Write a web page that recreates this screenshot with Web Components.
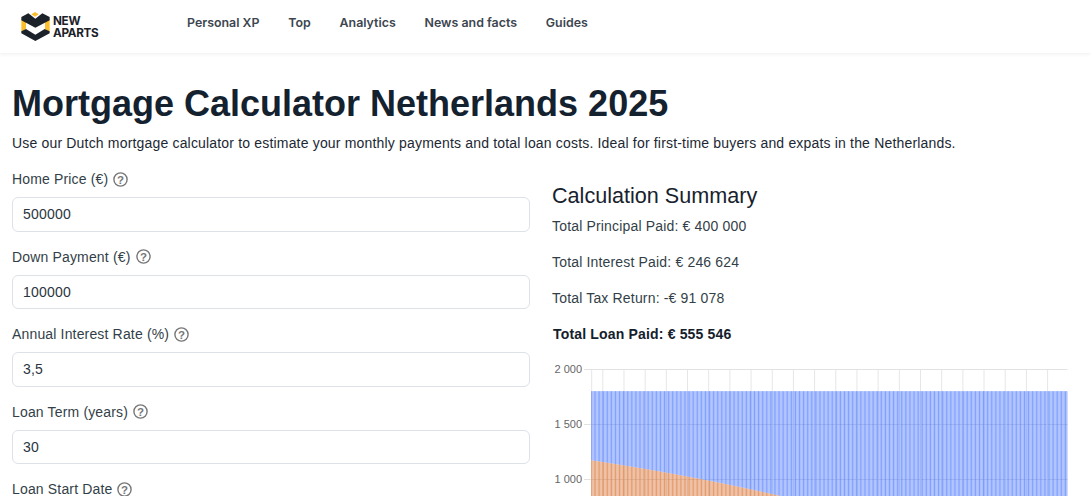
<!DOCTYPE html>
<html><head><meta charset="utf-8"><style>
html,body{margin:0;padding:0;background:#fff;overflow:hidden;height:496px}
body{font-family:"Liberation Sans",Arial,sans-serif;color:#14202c}
</style></head><body>
<site-nav></site-nav>
<calc-page></calc-page>
<script>
class SiteNav extends HTMLElement{constructor(){super();this.attachShadow({mode:'open'}).innerHTML=`<style>
:host{display:flex;align-items:center;box-sizing:border-box;height:53px;padding-bottom:8px;box-shadow:0 1px 4px rgba(0,0,0,.07);background:#fff;position:relative;font-family:Inter,sans-serif}
.logo{display:flex;align-items:center;gap:2px;margin-left:20px;width:167px;padding-top:8px}
.t{font:700 11.700px/12px Inter,sans-serif;color:#1b2229;letter-spacing:-.3px}
a{font-size:12.400px;font-weight:600;color:#3d4650;margin-right:28.800px}
</style><div class="logo"><svg width="31" height="30" viewBox="60 27 93 90"><path d="M105 27L116 34L105 41L94 34Z" fill="#fbbf2d"/><path d="M64 48L78 55V78L64 86Z" fill="#fbbf2d"/><path d="M149 48L135 55V78L149 86Z" fill="#fbbf2d"/><path d="M64 42L85 31L106 47L127 31L149 42V52L106 74L64 52Z" fill="#1b2229"/><path d="M64 85L78 78L106 95L134 78L149 85V91L106 114L64 91Z" fill="#1b2229"/></svg><div class="t">NEW<br>APARTS</div></div>
<a>Personal XP</a><a>Top</a><a>Analytics</a><a>News and facts</a><a>Guides</a>`}}
customElements.define('site-nav',SiteNav);

class HelpIcon extends HTMLElement{constructor(){super();this.attachShadow({mode:'open'}).innerHTML=`<style>:host{display:inline-block;width:15px;height:15px;margin-left:5px;vertical-align:-2.500px}
svg{display:block}text{font:700 11.500px "Liberation Sans",sans-serif;fill:#777}</style><svg width="15" height="15" viewBox="0 0 15 15"><circle cx="7.500" cy="7.500" r="6.600" fill="none" stroke="#777" stroke-width="1.400"/><text x="7.500" y="11.600" text-anchor="middle">?</text></svg>`}}
customElements.define('help-icon',HelpIcon);

class FormField extends HTMLElement{constructor(){super();this.attachShadow({mode:'open'}).innerHTML=`<style>
:host{display:block;margin-bottom:15px}
label{display:block;font-size:14px;line-height:20px;letter-spacing:.16px;color:#333f48;margin-bottom:8px}
.i{box-sizing:border-box;height:34.500px;border:1px solid #dfe1e8;border-radius:6px;padding:0 10px;display:flex;align-items:center;font-size:14px;letter-spacing:.2px;color:#2b3540}
</style><label>${this.getAttribute('label')}<help-icon></help-icon></label><div class="i">${this.getAttribute('value')}</div>`}}
customElements.define('form-field',FormField);

class MortgageChart extends HTMLElement{constructor(){super();
const W=539,H=150;
const X=v=>v-552;
let g='';
const h=[[2000,369.500],[1500,424.500],[1000,479.500]];
h.forEach(([l,y])=>{g+=`<line x1="${X(584)}" x2="${X(1067.500)}" y1="${y-364}" y2="${y-364}" stroke="#e2e2e2"/>`;
g+=`<text x="${X(582)}" y="${y-364+3.500}" text-anchor="end">${l.toString().replace(/\B(?=(\d{3})+$)/g,' ')}</text>`;});
for(let i=0;i<23;i++){const x=i==0?591.700:602.800+(i-1)*21.180;g+=`<line x1="${X(x)}" x2="${X(x)}" y1="${369.500-364}" y2="${H}" stroke="#e6e6e6"/>`;}
const r=.035/12,P=400000,M=P*r/(1-Math.pow(1+r,-360)),step=476.500/360;
let b='',o='';
const yv=v=>478.700-(v-1000)*.1100-364;
let bal=P;
for(let n=0;n<360;n++){const it=bal*r,x=X(591.200)+n*step,w=step*.74;
bal-=M-it;
o+=`<rect x="${x.toFixed(2)}" y="${yv(it).toFixed(2)}" width="${w.toFixed(2)}" height="${(H-yv(it)).toFixed(2)}"/>`;
b+=`<rect x="${x.toFixed(2)}" y="${yv(M).toFixed(2)}" width="${w.toFixed(2)}" height="${(yv(it)-yv(M)).toFixed(2)}"/>`;}
this.attachShadow({mode:'open'}).innerHTML=`<style>:host{display:block;height:${H}px}svg{display:block;overflow:hidden}text{font:11px "Liberation Sans",sans-serif;fill:#666}</style>
<svg width="${W}" height="${H}" viewBox="0 0 ${W} ${H}">${g}<g fill="rgb(60,110,255)" fill-opacity=".66">${b}</g><g fill="rgb(218,118,55)" fill-opacity=".74">${o}</g></svg>`}}
customElements.define('mortgage-chart',MortgageChart);

class CalcPage extends HTMLElement{constructor(){super();this.attachShadow({mode:'open'}).innerHTML=`<style>
:host{display:block;padding:29px 12px 0}
h1{margin:0;font-size:36px;line-height:44px;font-weight:700;color:#14212e}
.lead{margin:7px 0 0;font-size:14px;line-height:20px;letter-spacing:.177px;color:#1c2833;white-space:nowrap}
.cols{display:grid;grid-template-columns:518px 1fr;column-gap:22px;margin-top:16px}
h2{margin:12.500px 0 0;font-size:21.600px;line-height:28px;font-weight:400;color:#17222d}
p{margin:0;font-size:14px;line-height:20px;letter-spacing:.17px;color:#333f48;margin-top:16px}
h2+p{margin-top:6.500px}
p.t{font-weight:700;color:#14202c;margin-left:1px}
mortgage-chart{margin-top:20px}
</style><h1>Mortgage Calculator Netherlands 2025</h1>
<div class="lead">Use our Dutch mortgage calculator to estimate your monthly payments and total loan costs. Ideal for first-time buyers and expats in the Netherlands.</div>
<div class="cols"><div>
<form-field label="Home Price (€)" value="500000"></form-field>
<form-field label="Down Payment (€)" value="100000"></form-field>
<form-field label="Annual Interest Rate (%)" value="3,5"></form-field>
<form-field label="Loan Term (years)" value="30"></form-field>
<form-field label="Loan Start Date" value=""></form-field>
</div><div>
<h2>Calculation Summary</h2>
<p>Total Principal Paid: € 400 000</p>
<p>Total Interest Paid: € 246 624</p>
<p>Total Tax Return: -€ 91 078</p>
<p class="t">Total Loan Paid: € 555 546</p>
<mortgage-chart></mortgage-chart>
</div></div>`}}
customElements.define('calc-page',CalcPage);
</script></body></html>
